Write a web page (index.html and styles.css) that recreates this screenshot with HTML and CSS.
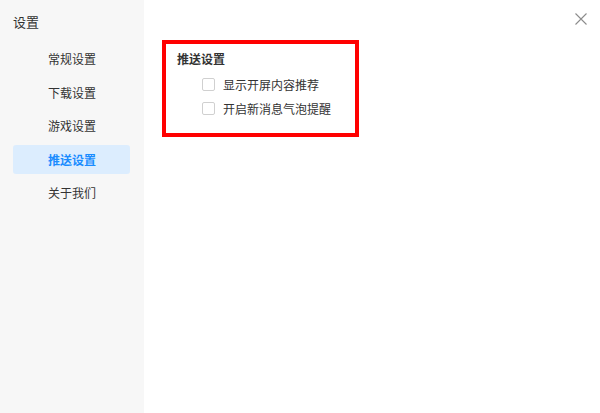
FILE: index.html
```html
<!DOCTYPE html>
<html lang="zh-CN">
<head>
    <meta charset="UTF-8">
    <title>设置</title>
    <link rel="stylesheet" href="styles.css">
</head>
<body>
    <div class="window">
        <aside class="sidebar">
            <div class="sidebar-title">设置</div>
            <ul class="menu">
                <li class="menu-item">常规设置</li>
                <li class="menu-item">下载设置</li>
                <li class="menu-item">游戏设置</li>
                <li class="menu-item active">推送设置</li>
                <li class="menu-item">关于我们</li>
            </ul>
        </aside>

        <main class="content">
            <section class="panel">
                <h2 class="panel-title">推送设置</h2>
                <label class="check-row"><span class="checkbox"></span>显示开屏内容推荐</label>
                <label class="check-row"><span class="checkbox"></span>开启新消息气泡提醒</label>
            </section>
        </main>

        <button class="close-btn" aria-label="关闭">
            <svg width="12" height="12" viewBox="0 0 12 12">
                <path d="M0.5 0.5 L11.5 11.5 M11.5 0.5 L0.5 11.5" stroke="#8c8c8c" stroke-width="1.1" fill="none"/>
            </svg>
        </button>
    </div>
</body>
</html>
```

FILE: styles.css
```css
body {
    margin: 0;
    font-family: "Noto Sans CJK SC", "Microsoft YaHei", sans-serif;
    color: #333;
    background-color: #fff;
}
.window {
    position: relative;
    display: flex;
    width: 600px;
    height: 413px;
    overflow: hidden;
}
.sidebar {
    width: 144px;
    flex-shrink: 0;
    background-color: #f7f7f7;
    padding: 12px 14px 0 13px;
    box-sizing: border-box;
}
.sidebar-title {
    font-size: 13px;
    line-height: 20px;
    color: #333;
}
.menu {
    list-style: none;
    margin: 12px 0 0;
    padding: 0;
    display: flex;
    flex-direction: column;
    gap: 4.5px;
}
.menu-item {
    height: 29px;
    line-height: 29px;
    padding-left: 35px;
    font-size: 12px;
    color: #333;
    border-radius: 3px;
}
.menu-item.active {
    background-color: #dcedfe;
    color: #1a8cff;
    font-weight: bold;
}

/* 右侧内容 */
.content {
    flex: 1;
    padding: 40px 0 0 18px;
}
.panel {
    width: 197px;
    height: 97px;
    border: 4px solid #ff0000;
    box-sizing: border-box;
    padding: 6px 0 0 11px;
}
.panel-title {
    margin: 0 0 5px;
    font-size: 12px;
    line-height: 18px;
    font-weight: bold;
    color: #333;
}
.check-row {
    display: flex;
    align-items: center;
    height: 23.5px;
    padding-left: 25px;
    font-size: 12px;
    color: #333;
}
.checkbox {
    width: 11px;
    height: 11px;
    border: 1px solid #d0d0d0;
    border-radius: 2px;
    background-color: #fff;
    margin-right: 8px;
}
.close-btn {
    position: absolute;
    top: 12px;
    right: 12px;
    width: 14px;
    height: 14px;
    padding: 1px;
    border: none;
    background: none;
    cursor: pointer;
}
```
